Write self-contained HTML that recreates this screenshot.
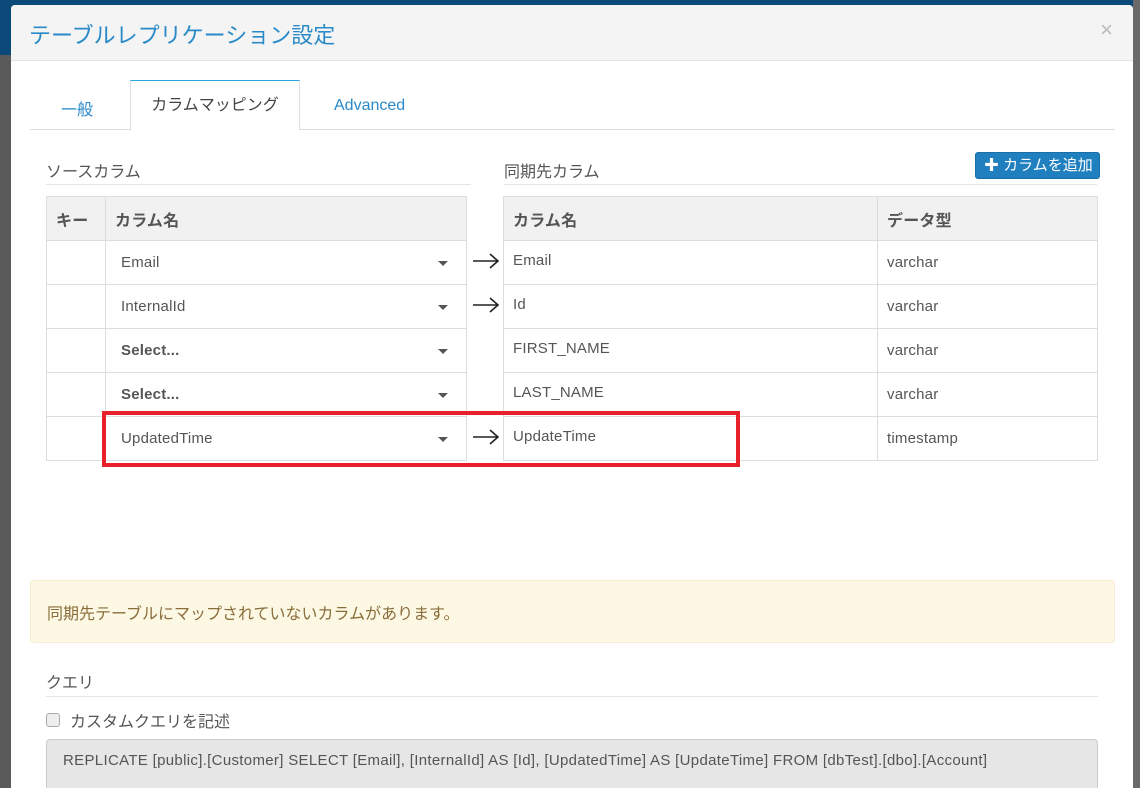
<!DOCTYPE html>
<html style="overflow:hidden;height:788px"><head><meta charset="utf-8"><style>
*{box-sizing:border-box;margin:0;padding:0}
body{width:1140px;height:788px;overflow:hidden;position:relative;background:#5a5a5a;font-family:"Liberation Sans","Noto Sans CJK JP",sans-serif;color:#333}
.topbar{position:absolute;left:0;top:0;width:1140px;height:55px;background:#0b4a78}
.rightbar{position:absolute;left:1133px;top:0;width:7px;height:788px;background:#6a6a6a}
.modal{position:absolute;left:11px;top:5px;width:1122px;height:783px;background:#fff;border-radius:4px 4px 0 0;overflow:hidden}
.hdr{height:56px;background:#f4f4f4;border-bottom:1px solid #e2e2e2;position:relative}
.hdr h1{position:absolute;left:18px;top:13px;font-size:22px;font-weight:normal;color:#2a8ac8}
.close{position:absolute;right:20px;top:12px;font-size:22px;color:#bbb}
.abs{position:absolute}
.tabline{left:19px;top:124px;width:1085px;height:1px;background:#ddd}
.tab{font-size:16px;color:#2a8ac8}
.atab{left:119px;top:75px;width:170px;height:50px;background:#fff;border:1px solid #ddd;border-top:1px solid #29a7e1;border-bottom:none;font-size:16px;color:#444;text-align:center;line-height:50px}
.sec{font-size:16px;color:#555}
.uline{height:1px;background:#e5e5e5}
table{border-collapse:collapse;position:absolute;font-size:15px;color:#555;letter-spacing:0.2px}
td,th{border:1px solid #ddd;height:44px;padding:0 9px;text-align:left}
th{background:#f1f1f1;font-weight:bold;color:#555;font-size:16px;height:44px}
.sel{position:relative;padding-left:15px}
.sel:after{content:"";position:absolute;right:18px;top:20px;border-left:5px solid transparent;border-right:5px solid transparent;border-top:5px solid #555}
.btn{left:964px;top:147px;width:125px;height:27px;background:#1f7fbf;border:1px solid #1a6fa8;border-radius:3px;color:#fff;font-size:15px;line-height:25px;padding-left:8px}
</style></head><body>
<div class="topbar"></div>
<div class="rightbar"></div>
<div class="modal">
 <div class="hdr"><h1>テーブルレプリケーション設定</h1><div class="close">×</div></div>
 <div class="abs tabline"></div>
 <div class="abs tab" style="left:50px;top:91px">一般</div>
 <div class="abs atab">カラムマッピング</div>
 <div class="abs tab" style="left:323px;top:92px">Advanced</div>

 <div class="abs sec" style="left:35px;top:153px">ソースカラム</div>
 <div class="abs uline" style="left:35px;top:179px;width:425px"></div>
 <div class="abs sec" style="left:493px;top:153px">同期先カラム</div>
 <div class="abs uline" style="left:493px;top:179px;width:593px"></div>
 <div class="abs btn"><b>✚</b> カラムを追加</div>

 <table style="left:35px;top:191px;width:421px">
  <tr><th style="width:59px">キー</th><th>カラム名</th></tr>
  <tr><td></td><td class="sel">Email</td></tr>
  <tr><td></td><td class="sel">InternalId</td></tr>
  <tr><td></td><td class="sel"><b>Select...</b></td></tr>
  <tr><td></td><td class="sel"><b>Select...</b></td></tr>
  <tr><td></td><td class="sel">UpdatedTime</td></tr>
 </table>
 <svg class="abs" style="left:460px;top:246px" width="30" height="20"><path d="M2 10H27M19 3L27 10L19 17" stroke="#222" stroke-width="1.6" fill="none"/></svg>
 <svg class="abs" style="left:460px;top:290px" width="30" height="20"><path d="M2 10H27M19 3L27 10L19 17" stroke="#222" stroke-width="1.6" fill="none"/></svg>
 <svg class="abs" style="left:460px;top:422px" width="30" height="20"><path d="M2 10H27M19 3L27 10L19 17" stroke="#222" stroke-width="1.6" fill="none"/></svg>
 <table style="left:492px;top:191px;width:595px">
  <tr><th style="width:374px">カラム名</th><th>データ型</th></tr>
  <tr><td style="vertical-align:top;padding-top:11px">Email</td><td>varchar</td></tr>
  <tr><td style="vertical-align:top;padding-top:11px">Id</td><td>varchar</td></tr>
  <tr><td style="vertical-align:top;padding-top:11px">FIRST_NAME</td><td>varchar</td></tr>
  <tr><td style="vertical-align:top;padding-top:11px">LAST_NAME</td><td>varchar</td></tr>
  <tr><td style="vertical-align:top;padding-top:11px">UpdateTime</td><td>timestamp</td></tr>
 </table>
 <div class="abs" style="left:91px;top:406px;width:638px;height:56px;border:4px solid #e8202a"></div>

 <div class="abs" style="left:19px;top:575px;width:1085px;height:63px;background:#fcf8e3;border:1px solid #faebcc;border-radius:4px;color:#8a6d3b;font-size:16px;padding:19px 0 0 16px">同期先テーブルにマップされていないカラムがあります。</div>

 <div class="abs sec" style="left:35px;top:664px">クエリ</div>
 <div class="abs uline" style="left:35px;top:691px;width:1052px"></div>
 <div class="abs" style="left:35px;top:708px;width:14px;height:14px;border:1px solid #aaa;border-radius:3px;background:#eee"></div>
 <div class="abs sec" style="left:59px;top:703px">カスタムクエリを記述</div>
 <div class="abs" style="left:35px;top:734px;width:1052px;height:80px;background:#e6e6e6;border:1px solid #ccc;border-radius:4px;font-size:15px;letter-spacing:0.32px;color:#555;padding:12px 16px;white-space:nowrap">REPLICATE [public].[Customer] SELECT [Email], [InternalId] AS [Id], [UpdatedTime] AS [UpdateTime] FROM [dbTest].[dbo].[Account]</div>
</div>
</body></html>
